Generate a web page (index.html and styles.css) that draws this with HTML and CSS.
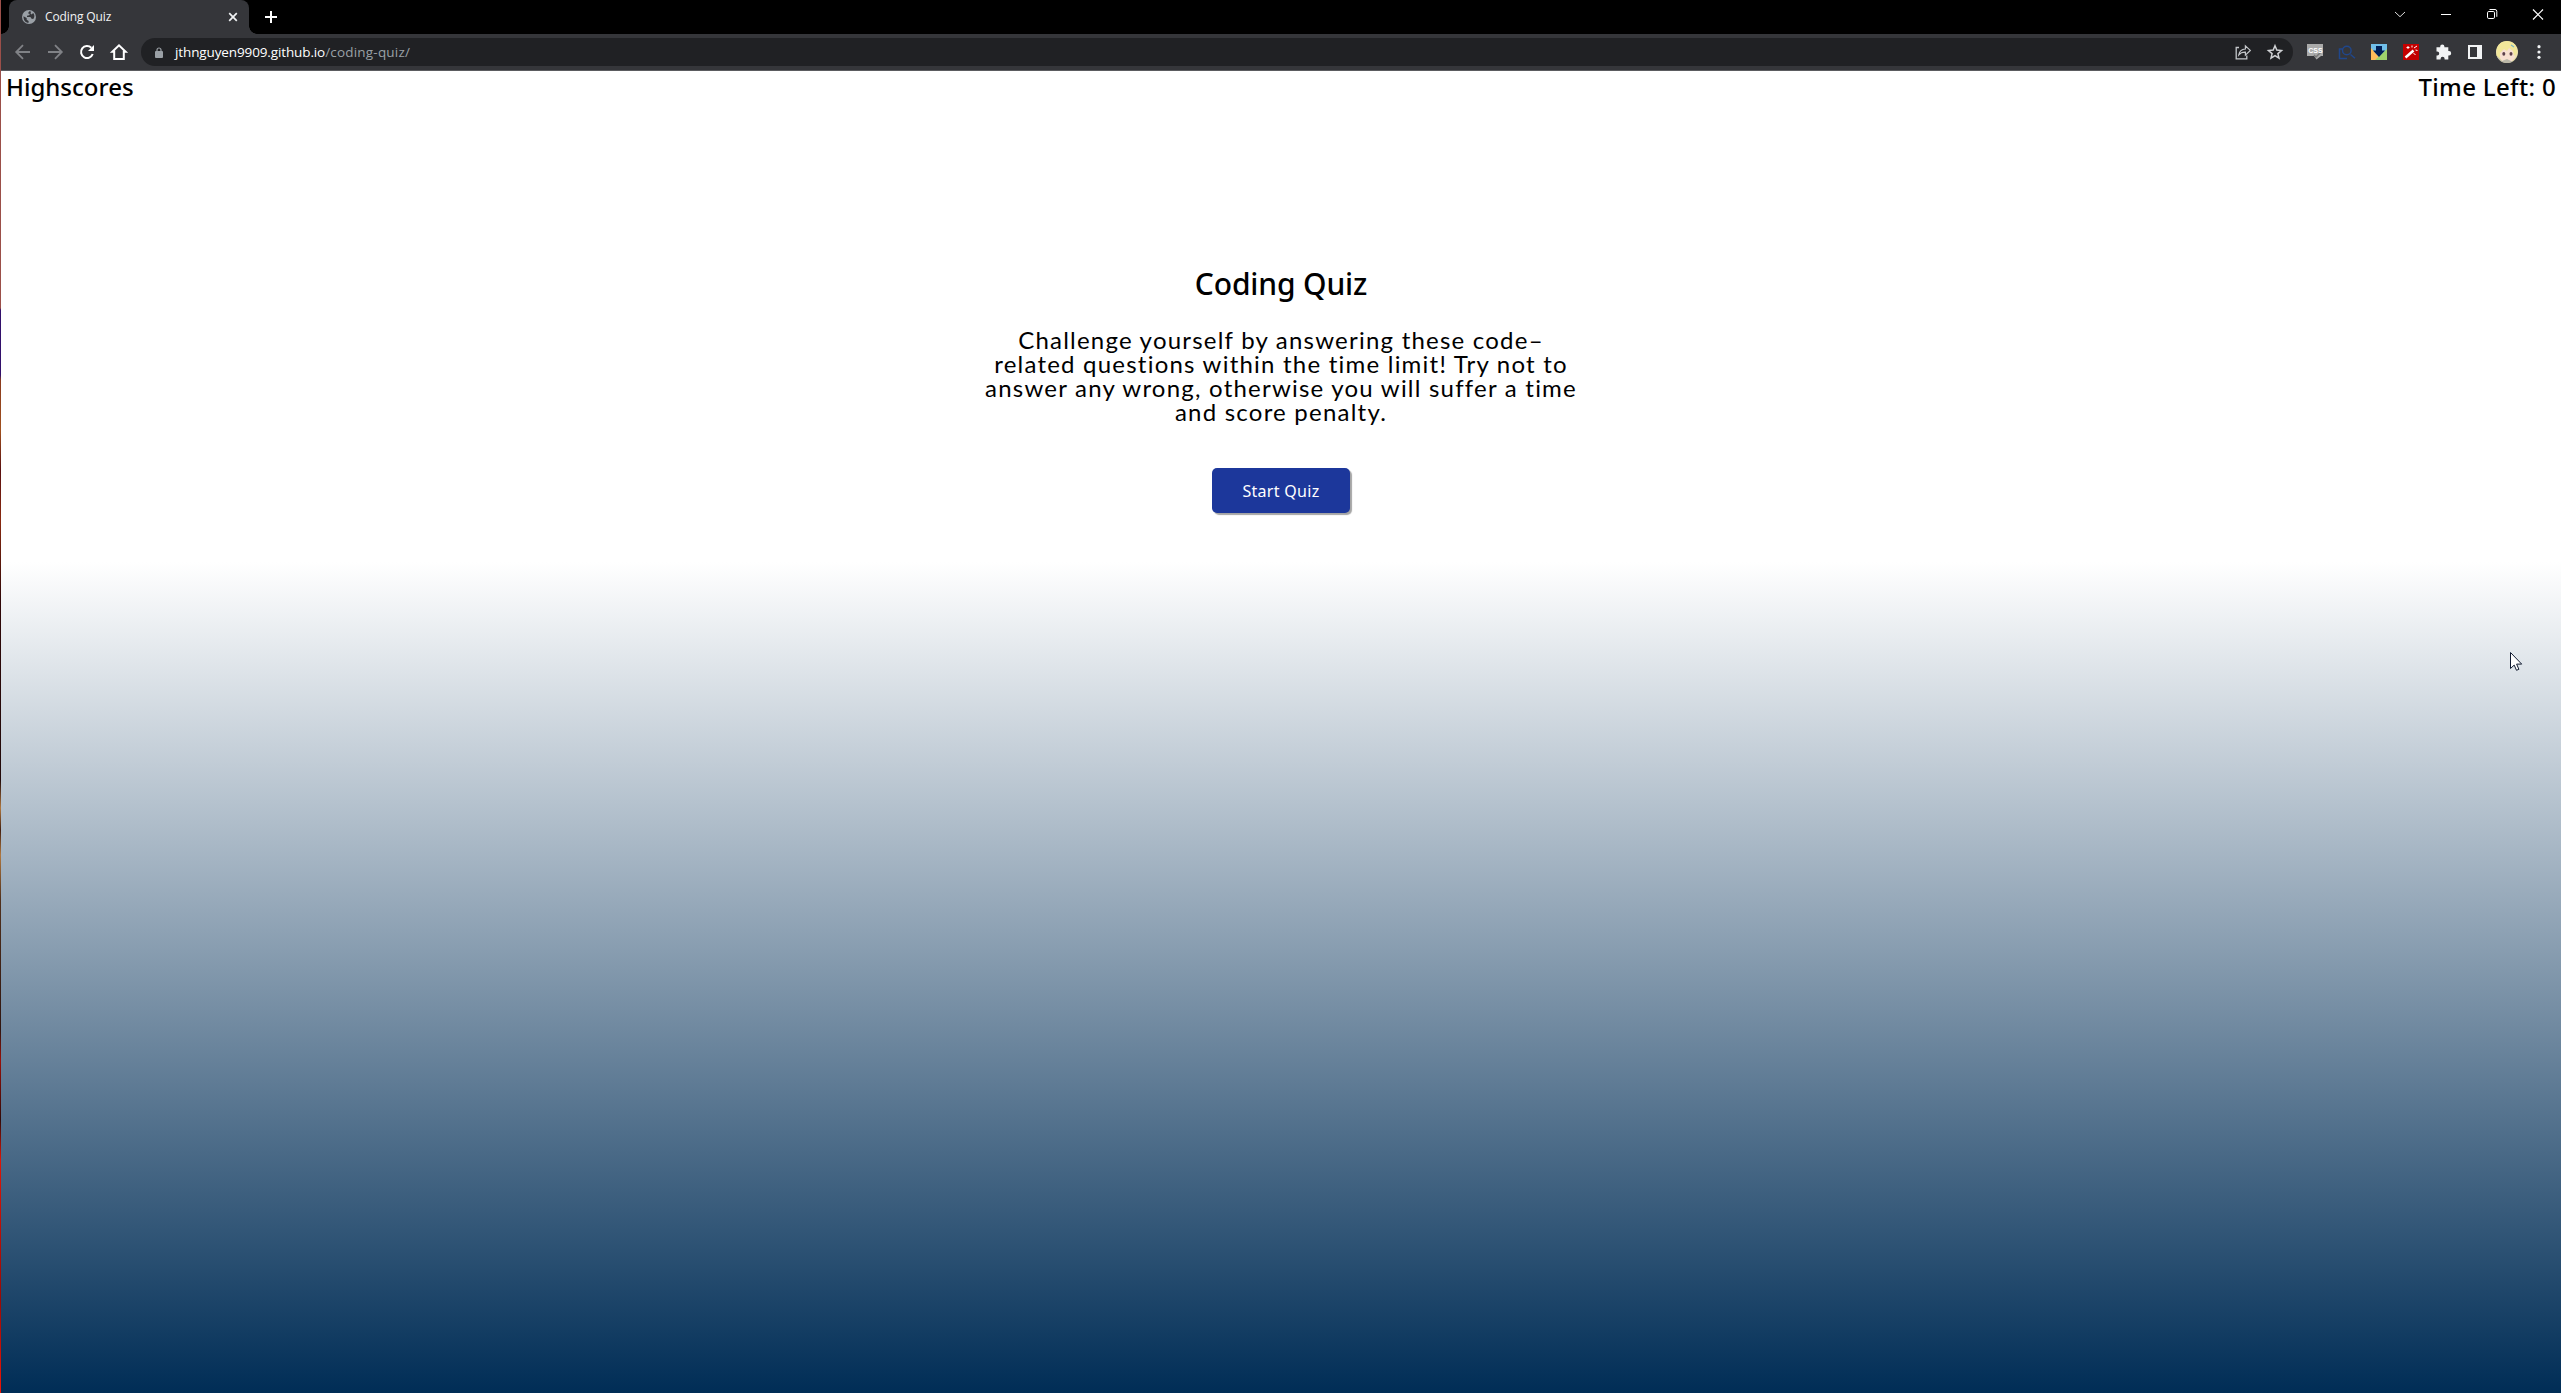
FILE: index.html
```
<!DOCTYPE html>
<html lang="en">
<head>
<meta charset="utf-8">
<title>Coding Quiz</title>
<link rel="stylesheet" href="styles.css">
</head>
<body>
<div class="desktop-edge"></div>
<div class="window">
  <div class="titlebar">
    <div class="tab">
      <svg class="favicon" width="14" height="14" viewBox="0 0 14 14"><circle cx="7" cy="7" r="7" fill="#9aa0a6"/><path d="M1.5 6.2 4.7 8v1.7L6.6 11v1.8C3.4 12.700 1.300 10 1.500 6.200zM7.300 1.300 6 3.200l1.800.8-.6 1.300-2.200.400v1.400h3.400L9.600 8.800l1.700.2c1.500-1.900 1.500-4-.1-5.900L9.500 4.500 8.400 3.300l.8-1.500z" fill="#35363a"/></svg>
      <span class="tab-title">Coding Quiz</span>
      <svg class="tab-close" width="10" height="10" viewBox="0 0 10 10"><path d="M1.200 1.200l7.600 7.600M8.800 1.200L1.200 8.800" stroke="#f1f3f4" stroke-width="1.700"/></svg>
    </div>
    <svg class="new-tab" width="12" height="12" viewBox="0 0 12 12"><path d="M6 0v12M0 6h12" stroke="#fff" stroke-width="2"/></svg>
    <div class="window-controls">
      <svg width="46" height="29" viewBox="0 0 46 29"><path d="M18 12l5 4.700 5-4.700" fill="none" stroke="#ddd"/></svg>
      <svg width="46" height="29" viewBox="0 0 46 29"><path d="M18 14.500h10" stroke="#fff"/></svg>
      <svg width="46" height="29" viewBox="0 0 46 29"><rect x="18.500" y="11.500" width="7" height="7" rx="1.300" fill="none" stroke="#fff"/><path d="M20.500 9.500h5.500a1.800 1.800 0 0 1 1.800 1.800v5.500" fill="none" stroke="#fff"/></svg>
      <svg width="46" height="29" viewBox="0 0 46 29"><path d="M18 9.500l10 10M28 9.500l-10 10" stroke="#fff" stroke-width="1.200"/></svg>
    </div>
  </div>
  <div class="toolbar">
    <div class="nav">
      <svg width="32" height="32" viewBox="0 0 32 32"><path d="M23 16H9.500M16 9.200 9.200 16l6.800 6.800" fill="none" stroke="#808286" stroke-width="1.800"/></svg>
      <svg width="32" height="32" viewBox="0 0 32 32"><path d="M9 16h13.500M16 9.200l6.800 6.800-6.800 6.800" fill="none" stroke="#808286" stroke-width="1.800"/></svg>
      <svg width="32" height="32" viewBox="0 0 32 32"><path d="M21.700 18A6 6 0 1 1 20.300 11.800" fill="none" stroke="#fff" stroke-width="2"/><path d="M23 9v6h-6z" fill="#fff"/></svg>
      <svg width="32" height="32" viewBox="0 0 32 32"><path d="M9.300 15.800 16 9.300l6.700 6.500h-1.900V23h-9.600v-7.200z" fill="none" stroke="#fff" stroke-width="2"/></svg>
    </div>
    <div class="address">
      <svg class="lock" width="8" height="11" viewBox="0 0 8 11"><path d="M2 5V3a2 2 0 0 1 4 0v2" fill="none" stroke="#9aa0a6" stroke-width="1.200"/><rect y="4" width="8" height="7" rx="1" fill="#9aa0a6"/></svg>
      <span class="url"><span class="host">jthnguyen9909.github.io</span><span class="path">/coding-quiz/</span></span>
      <div class="address-actions">
        <svg width="32" height="32" viewBox="0 0 32 32"><path d="M12 11.500H9.200v11.300h10.600V19.500" fill="none" stroke="#c4c7ca" stroke-width="1.300"/><path d="M11.800 18.800c.6-3.700 3-5.600 6.600-5.800V9.800l4.900 4.600-4.900 4.700v-3c-3-.1-5 .7-6.600 2.700z" fill="none" stroke="#c4c7ca" stroke-width="1.200"/></svg>
        <svg width="32" height="32" viewBox="0 0 32 32"><path d="M16 9.800l1.800 4.300 4.700.4-3.600 3.100 1.100 4.600-4-2.500-4 2.500 1.100-4.600-3.600-3.100 4.700-.4z" fill="none" stroke="#d0d2d5" stroke-width="1.500"/></svg>
      </div>
    </div>
    <div class="extensions">
      <svg width="32" height="32" viewBox="0 0 32 32"><path d="M8 8h16v12h-2l-4.500 3.500L15 20H8z" fill="#aaa"/><path d="M15 19l2 2 5-5" fill="none" stroke="#777" stroke-width="1.500"/><text class="css-label" x="9.300" y="17">CSS</text></svg>
      <svg width="32" height="32" viewBox="0 0 32 32"><path d="M11.500 13H8.500v9.500H16M19.500 18.500l4.500 3.800" fill="none" stroke="#20478c" stroke-width="1.500"/><circle cx="15.800" cy="14.500" r="4.300" fill="none" stroke="#20478c" stroke-width="1.400"/></svg>
      <svg width="32" height="32" viewBox="0 0 32 32"><path d="M8 8h16v16H8z" fill="#70bfe9"/><path d="M8 12l8 9-3 3H8z" fill="#ffbd5a"/><path d="M24 13v11H12z" fill="#9ed26b"/><path d="M13 10h6v4.500h3L16 21l-6-6.500h3z" fill="#001f56"/></svg>
      <svg width="32" height="32" viewBox="0 0 32 32"><rect x="8" y="8" width="16" height="16" fill="#c40000"/><path d="M10.500 21.500l8-7" stroke="#fff" stroke-width="2.500"/><path d="M13 10v3M11.500 11.500h3M17 9.500v2M19 12l3-2M20.500 14l2 .5M18.500 17.500l2 1" stroke="#fff" stroke-width="1"/></svg>
      <svg width="32" height="32" viewBox="0 0 32 32"><path d="M9.500 11.300h3.700v-.8a2.100 2.100 0 0 1 4.200 0v.8h3.900v3.800h.7a2.200 2.200 0 0 1 0 4.400h-.7v4h-3.700v-.8a2 2 0 0 0-4 0v.8H9.500v-4h.7a2 2 0 0 0 0-4h-.7z" fill="#f1f3f4"/></svg>
      <svg width="32" height="32" viewBox="0 0 32 32"><path d="M9 9h14v14H9zM11 11v10h7V11z" fill="#f1f3f4" fill-rule="evenodd"/></svg>
      <svg width="32" height="32" viewBox="0 0 32 32"><clipPath id="avatar"><circle cx="16" cy="16" r="11"/></clipPath><g clip-path="url(#avatar)"><path d="M5 5h22v22H5z" fill="#eee3b0"/><path d="M8 12h16v9l-4 5h-8l-4-6z" fill="#f7dfd0"/><path d="M6 16C5 8 10 5 16 5s11 4 10 12l-3 3-1-5-4-3-2 3-3-2-4 4v5l-4-2z" fill="#f2e79a"/><path d="M6 20l5 5 5-2 6 3 4-5v6H6z" fill="#b9b7a8"/><ellipse cx="12.800" cy="17.800" rx="1.500" ry="1.900" fill="#5c3f4b"/><ellipse cx="20" cy="17.800" rx="1.500" ry="1.900" fill="#5c3f4b"/><path d="M20 9l3 2" stroke="#7cb8c8" stroke-width="1.200"/></g></svg>
      <svg width="32" height="32" viewBox="0 0 32 32"><g fill="#f1f3f4"><circle cx="16" cy="10.700" r="1.600"/><circle cx="16" cy="16" r="1.600"/><circle cx="16" cy="21.300" r="1.600"/></g></svg>
    </div>
  </div>
  <main class="page">
    <header class="page-header">
      <span>Highscores</span>
      <span class="timer">Time Left: 0</span>
    </header>
    <section class="quiz">
      <h1>Coding Quiz</h1>
      <p>Challenge yourself by answering these code–<br>related questions within the time limit! Try not to<br>answer any wrong, otherwise you will suffer a time<br>and score penalty.</p>
      <button class="start">Start Quiz</button>
    </section>
  </main>
</div>
<svg class="cursor" width="13" height="20" viewBox="0 0 13 20"><path d="M.5.500v16l3.700-3.400 2.300 5.200 2.400-1-2.300-5.200h5.100z" fill="#fff" stroke="#111a30"/></svg>
</body>
</html>
```
FILE: styles.css
```
* { box-sizing: border-box; }

body {
  display: flex;
  width: 2561px;
  height: 1393px;
  margin: 0;
  overflow: hidden;
  background: #000;
  font-family: "Noto Sans", sans-serif;
}

svg { display: block; flex: none; }

.desktop-edge {
  flex: none;
  width: 1px;
  background: linear-gradient(#9b4f49 0, #9b4f49 308px, #32106b 310px, #32106b 375px, #8a3b1e 380px, #a0501e 430px, #5a1010 470px, #8a2a10 520px, #300808 600px, #220a0a 780px, #b07840 808px, #442010 830px, #b07840 855px, #50301c 900px, #301510 1030px, #9a1008 1060px, #300a08 1120px, #e01505 1160px, #9a0a05 1300px, #f01505 1393px);
}

.window { display: flex; flex: 1; flex-direction: column; }

.titlebar { display: flex; height: 34px; background: #000; }

.tab {
  position: relative;
  display: flex;
  align-items: center;
  width: 240px;
  margin-left: 8px;
  padding: 0 11px 0 13px;
  border-radius: 8px 8px 0 0;
  background: #35363a;
}

/* Concave corners where the tab meets the toolbar */
.tab::before, .tab::after {
  position: absolute;
  bottom: 0;
  width: 8px;
  height: 8px;
  content: "";
}
.tab::before { left: -8px; background: radial-gradient(circle at 0 0, #000 7.500px, #35363a 8px); }
.tab::after { right: -8px; background: radial-gradient(circle at 100% 0, #000 7.500px, #35363a 8px); }

.tab-title {
  flex: 1;
  margin-left: 9px;
  color: #f1f3f4;
  font: 12px/16px "Open Sans", sans-serif;
  letter-spacing: -.12px;
}

.new-tab { margin: 11px 0 0 16px; }
.window-controls { display: flex; margin-left: auto; }

.toolbar {
  display: flex;
  align-items: center;
  height: 37px;
  padding: 0 6px;
  border-bottom: 1px solid #5b5c60;
  background: #35363a;
}

.nav, .extensions, .address-actions { display: flex; }

.address {
  display: flex;
  flex: 1;
  align-items: center;
  height: 28px;
  margin: 0 6px;
  padding: 0 2px 0 14px;
  border-radius: 14px;
  background: #202124;
}

.url {
  margin-left: 12px;
  font: 13.500px/20px "Open Sans", sans-serif;
}
.host { color: #fff; letter-spacing: -.12px; }
.path { color: #9aa0a6; letter-spacing: .2px; }
.address-actions { margin-left: auto; }
.css-label { fill: #fff; font: bold 7px "Liberation Sans", sans-serif; }

.page {
  flex: 1;
  color: #000;
  background: linear-gradient(#fff 491px, #002d56 100%);
}

.page-header {
  display: flex;
  justify-content: space-between;
  padding: 0 5px;
  font-size: 24px;
  font-weight: 550;
  line-height: 31px;
}
.page-header .timer { letter-spacing: .33px; }

.quiz {
  display: flex;
  flex-direction: column;
  align-items: center;
  padding-top: 162px;
}

h1 {
  margin: 0;
  font-size: 30px;
  font-weight: 550;
  line-height: 40px;
  letter-spacing: -.15px;
}

p {
  margin: 24px 0 44px;
  font: 24px/24px Lato, sans-serif;
  letter-spacing: 1.220px;
  text-align: center;
}

.start {
  width: 138px;
  height: 45px;
  border: 0;
  border-radius: 5px;
  color: #fff;
  background: #1c379b;
  box-shadow: 2px 2px 1px #a5a5a5;
  font: 16px "Noto Sans", sans-serif;
  letter-spacing: .3px;
}

.cursor { position: absolute; left: 2510px; top: 652px; }
```
